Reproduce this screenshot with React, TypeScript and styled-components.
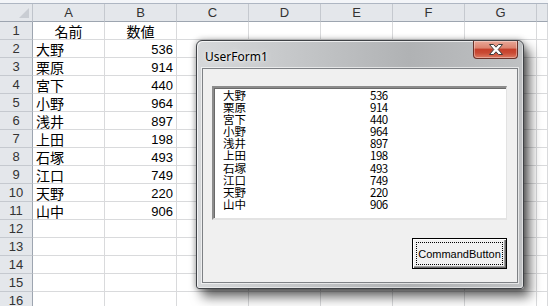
import React from "react";
import styled, { createGlobalStyle } from "styled-components";

const Global = createGlobalStyle`
  html, body { margin: 0; padding: 0; background: #ffffff; overflow: hidden; }
  #root { width: 548px; height: 306px; }
`;

const Screen = styled.div`
  position: relative;
  width: 548px;
  height: 306px;
  overflow: hidden;
  background: #ffffff;
  font-family: "Noto Sans CJK JP", "Noto Sans", sans-serif;
`;

const TopStrip = styled.div`
  height: 3px;
  background: #f3f5f8;
  border-bottom: 1px solid #aeb6c2;
`;

const Sheet = styled.div`
  display: grid;
  grid-template-columns: 33px repeat(7, 72px) 1fr;
  grid-auto-rows: 18px;
`;

const Corner = styled.div`
  position: relative;
  background: #e4e7eb;
  border-right: 1px solid #bfc4cb;
  border-bottom: 1px solid #9da5b0;
  box-sizing: border-box;
  &::after {
    content: "";
    position: absolute;
    right: 3px;
    bottom: 3px;
    width: 0;
    height: 0;
    border-left: 10px solid transparent;
    border-bottom: 10px solid #c9cdd3;
  }
`;

const ColHead = styled.div`
  background: #e4e7eb;
  border-right: 1px solid #c5c9cf;
  border-bottom: 1px solid #9da5b0;
  box-sizing: border-box;
  display: flex;
  align-items: center;
  justify-content: center;
  font-family: "Liberation Sans", "Noto Sans", sans-serif;
  font-size: 13px;
  color: #333;
`;

const RowHead = styled.div`
  background: #e4e7eb;
  border-right: 1px solid #9da5b0;
  border-bottom: 1px solid #c5c9cf;
  box-sizing: border-box;
  display: flex;
  align-items: center;
  justify-content: center;
  font-family: "Liberation Sans", "Noto Sans", sans-serif;
  font-size: 13px;
  color: #333;
`;

const Cell = styled.div<{ $align?: "left" | "center" | "right"; $num?: boolean }>`
  border-right: 1px solid #d9dadc;
  border-bottom: 1px solid #d9dadc;
  box-sizing: border-box;
  display: flex;
  align-items: center;
  padding: 1px 3px 0 3px;
  justify-content: ${(p) =>
    p.$align === "right" ? "flex-end" : p.$align === "center" ? "center" : "flex-start"};
  font-family: ${(p) =>
    p.$num ? `"Liberation Sans", sans-serif` : `"Noto Sans CJK JP", sans-serif`};
  font-size: ${(p) => (p.$num ? "13px" : "14px")};
  color: #000;
  white-space: nowrap;
  overflow: hidden;
`;

const Window = styled.div`
  position: absolute;
  left: 196px;
  top: 40px;
  width: 328px;
  height: 249px;
  box-sizing: border-box;
  border: 1px solid #3f4246;
  border-radius: 6px 6px 3px 3px;
  background: linear-gradient(90deg, #d6d8da 0%, #c2c4c6 35%, #b0b2b4 65%, #bfc1c3 100%);
  box-shadow: 0 0 6px rgba(0, 0, 0, 0.35), 6px 8px 12px rgba(0, 0, 0, 0.6),
    inset 1px 1px 0 rgba(255, 255, 255, 0.7), inset -1px -1px 0 rgba(255, 255, 255, 0.5);
  display: flex;
  flex-direction: column;
  padding: 0 5px 5px 5px;
`;

const TitleBar = styled.div`
  height: 27px;
  display: flex;
  align-items: flex-start;
  padding-left: 3px;
`;

const Title = styled.div`
  font-family: "Noto Sans", "Liberation Sans", sans-serif;
  font-size: 12px;
  line-height: 16px;
  margin-top: 8px;
  color: #000;
  text-shadow: 0 0 6px rgba(255, 255, 255, 0.9), 0 0 3px rgba(255, 255, 255, 0.9);
`;

const CloseButton = styled.div`
  margin-left: auto;
  margin-right: 0;
  width: 45px;
  height: 18px;
  box-sizing: border-box;
  border: 1px solid #6a3128;
  border-top: none;
  border-radius: 0 0 4px 4px;
  background: linear-gradient(
    180deg,
    #e9a797 0%,
    #dc8470 40%,
    #c6402b 50%,
    #c94a34 70%,
    #dc7a62 100%
  );
  box-shadow: inset 0 0 0 1px rgba(255, 255, 255, 0.35);
  display: flex;
  align-items: center;
  justify-content: center;
`;

const Client = styled.div`
  flex: 1;
  box-sizing: border-box;
  background: #f0f0f0;
  border: 1px solid #7e8185;
  box-shadow: 0 0 0 1px rgba(255, 255, 255, 0.6);
  display: flex;
  flex-direction: column;
  padding: 17px 10px 0 9px;
`;

const ListBox = styled.div`
  height: 134px;
  box-sizing: border-box;
  background: #ffffff;
  border-top: 2px solid #8c8c8c;
  border-left: 2px solid #8c8c8c;
  border-right: 1px solid #e3e3e3;
  border-bottom: 2px solid #e3e3e3;
  box-shadow: inset 1px 1px 0 #6a6a6a;
  padding: 1px 0 0 9px;
  display: grid;
  grid-template-columns: 147px 1fr;
  grid-auto-rows: 12.1px;
  align-content: start;
`;

const ListText = styled.div<{ $num?: boolean }>`
  font-family: "Noto Sans CJK JP", sans-serif;
  font-size: 11.5px;
  line-height: 12px;
  color: #000;
  letter-spacing: ${(p) => (p.$num ? "-0.5px" : "0")};
  white-space: nowrap;
`;

const CmdButton = styled.div`
  align-self: flex-end;
  margin-top: 18px;
  width: 95px;
  height: 31px;
  box-sizing: border-box;
  background: #f0f0f0;
  border: 1px solid #000;
  box-shadow: inset 1px 1px 0 #ffffff, inset -1px -1px 0 #696969, inset -2px -2px 0 #a0a0a0;
  padding: 3px;
  display: flex;
`;

const FocusRing = styled.div`
  flex: 1;
  border: 1px dotted #000;
  display: flex;
  align-items: center;
  justify-content: center;
  font-family: "Liberation Sans", sans-serif;
  font-size: 11px;
  color: #000;
  white-space: nowrap;
`;

const names: [string, number][] = [
  ["大野", 536],
  ["栗原", 914],
  ["宮下", 440],
  ["小野", 964],
  ["浅井", 897],
  ["上田", 198],
  ["石塚", 493],
  ["江口", 749],
  ["天野", 220],
  ["山中", 906],
];

const cols = ["A", "B", "C", "D", "E", "F", "G", ""];

function CloseGlyph() {
  return (
    <svg width="16" height="11" viewBox="0 0 16 11">
      <polygon
        points="1.5,0.5 5.5,0.5 8,3.2 10.5,0.5 14.5,0.5 10.2,5.5 14.5,10.5 10.5,10.5 8,7.8 5.5,10.5 1.5,10.5 5.8,5.5"
        fill="#ffffff"
        stroke="#3d3d3d"
        strokeWidth="1"
        strokeLinejoin="round"
      />
    </svg>
  );
}

export default function App() {
  const rows = Array.from({ length: 16 }, (_, i) => i + 1);
  return (
    <Screen>
      <Global />
      <TopStrip />
      <Sheet>
        <Corner />
        {cols.map((c, i) => (
          <ColHead key={i}>{c}</ColHead>
        ))}
        {rows.map((r) => {
          const data = r >= 2 && r <= 11 ? names[r - 2] : null;
          return (
            <React.Fragment key={r}>
              <RowHead>{r}</RowHead>
              <Cell $align={r === 1 ? "center" : "left"}>
                {r === 1 ? "名前" : data ? data[0] : ""}
              </Cell>
              <Cell $align={r === 1 ? "center" : "right"} $num={r !== 1}>
                {r === 1 ? "数値" : data ? data[1] : ""}
              </Cell>
              {Array.from({ length: 6 }, (_, k) => (
                <Cell key={k} />
              ))}
            </React.Fragment>
          );
        })}
      </Sheet>

      <Window>
        <TitleBar>
          <Title>UserForm1</Title>
          <CloseButton>
            <CloseGlyph />
          </CloseButton>
        </TitleBar>
        <Client>
          <ListBox>
            {names.map(([n, v]) => (
              <React.Fragment key={n}>
                <ListText>{n}</ListText>
                <ListText $num>{v}</ListText>
              </React.Fragment>
            ))}
          </ListBox>
          <CmdButton>
            <FocusRing>CommandButton</FocusRing>
          </CmdButton>
        </Client>
      </Window>
    </Screen>
  );
}
